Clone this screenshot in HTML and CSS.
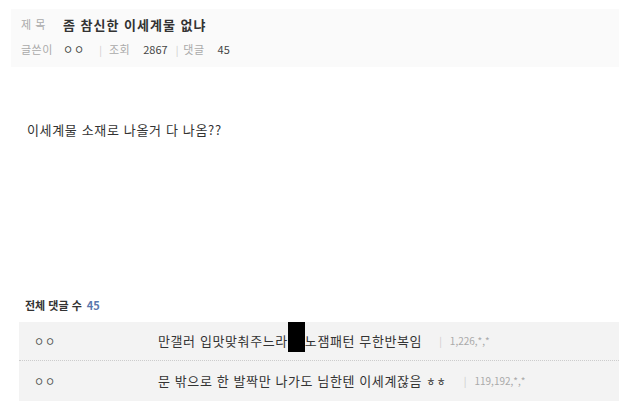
FILE: index.html
```html
<!DOCTYPE html>
<html lang="ko">
<head>
<meta charset="utf-8">
<link rel="stylesheet" href="styles.css">
</head>
<body>
<div class="page">
  <div class="head">
    <div class="row title-row">
      <span class="label">제 목</span>
      <span class="title">좀 참신한 이세계물 없냐</span>
    </div>
    <div class="row meta-row">
      <span class="label">글쓴이</span>
      <span class="nick">ㅇㅇ</span>
      <span class="sep">|</span>
      <span class="mlabel">조회</span>
      <span class="num">2867</span>
      <span class="sep sep-2">|</span>
      <span class="mlabel">댓글</span>
      <span class="num">45</span>
    </div>
  </div>
  <div class="body-text">이세계물 소재로 나올거 다 나옴??</div>
  <div class="count">전체 댓글 수 <span class="count-num">45</span></div>
  <div class="comments">
    <div class="comment">
      <span class="c-nick">ㅇㅇ</span>
      <span class="c-text"><span>만갤러 입맛맞춰주느라</span><span class="redact"></span><span>노잼패턴 무한반복임</span></span>
      <span class="c-sep">|</span>
      <span class="c-ip">1,226,*,*</span>
    </div>
    <div class="comment">
      <span class="c-nick">ㅇㅇ</span>
      <span class="c-text"><span>문 밖으로 한 발짝만 나가도 님한텐 이세계잖음 <span class="hh">ㅎㅎ</span></span></span>
      <span class="c-sep">|</span>
      <span class="c-ip">119,192,*,*</span>
    </div>
  </div>
</div>
</body>
</html>
```
FILE: styles.css
```css
html, body {
  margin: 0;
  padding: 0;
  background: #fff;
  overflow: hidden;
}
body {
  font-family: "Noto Sans CJK KR", "Noto Sans", sans-serif;
  color: #333;
  width: 619px;
  height: 402px;
}
.page {
  padding-top: 9px;
}
.head {
  margin-left: 11px;
  width: calc(100% - 11px);
  height: 58px;
  background: #fafafa;
  box-sizing: border-box;
  padding: 4px 0 0 10px;
}
.row {
  display: flex;
  align-items: center;
}
.title-row {
  height: 22px;
}
.meta-row {
  height: 22px;
  margin-top: 3px;
}
.label {
  font-size: 11px;
  color: #aaa;
  width: 42px;
  flex: none;
  letter-spacing: 0.5px;
}
.title {
  font-size: 13px;
  font-weight: bold;
  color: #333;
  letter-spacing: 1px;
}
.nick {
  font-size: 11px;
  color: #444;
  letter-spacing: 1px;
}
.sep {
  font-size: 10px;
  color: #ccc;
  margin: 0 7px 0 14px;
}
.sep-2 {
  margin: 0 5px 0 8px;
}
.mlabel {
  font-size: 11px;
  color: #aaa;
  margin-right: 13px;
  letter-spacing: 0.5px;
}
.num {
  font-size: 11px;
  color: #444;
}
.body-text {
  margin: 53px 0 0 27px;
  font-size: 13px;
  color: #333;
  letter-spacing: 0.65px;
  height: 20px;
  line-height: 20px;
}
.count {
  margin: 156px 0 0 25px;
  font-size: 11px;
  font-weight: bold;
  color: #333;
  height: 18px;
  line-height: 18px;
}
.count-num {
  color: #5b78ad;
  margin-left: 2px;
}
.comments {
  margin: 8px 0 0 19px;
  width: calc(100% - 19px);
  background: #f3f3f3;
}
.comment {
  height: 38px;
  line-height: 38px;
  display: flex;
  border-bottom: 1px dotted #ccc;
}
.comment:last-child {
  border-bottom: none;
  height: 40px;
  line-height: 40px;
}
.c-nick {
  width: 139px;
  padding-left: 15px;
  box-sizing: border-box;
  flex: none;
  font-size: 11px;
  color: #555;
  letter-spacing: 1px;
}
.c-text {
  font-size: 13px;
  color: #333;
  letter-spacing: 0.6px;
  display: flex;
  white-space: pre;
}
.hh {
  font-size: 10px;
  letter-spacing: 1px;
}
.redact {
  width: 17px;
  height: 30px;
  background: #000;
  align-self: flex-start;
}
.c-sep {
  font-size: 10px;
  color: #ccc;
  margin: 0 8px 0 17px;
}
.c-ip {
  font-size: 10px;
  color: #aaa;
}
```
